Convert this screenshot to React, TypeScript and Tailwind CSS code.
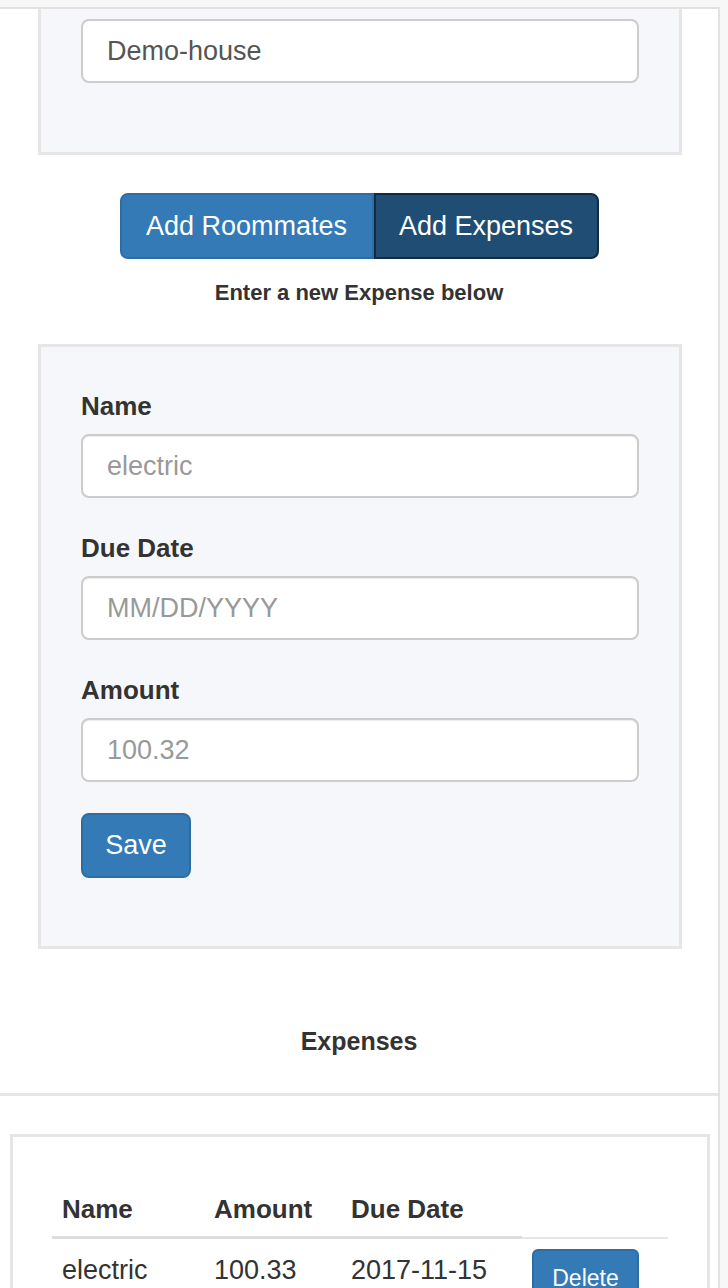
import React from 'react';

const font = { fontFamily: '"Liberation Sans", Arial, Helvetica, sans-serif' };

const Field: React.FC<{ label: string; placeholder: string }> = ({ label, placeholder }) => (
    <div>
        <label className="block text-[26px] font-bold text-[#333] leading-[28px] mb-[14px]">{label}</label>
        <input
            readOnly
            placeholder={placeholder}
            className="block w-full h-[64px] px-[24px] text-[27px] text-[#555] placeholder:text-[#999] bg-white border-2 border-[#ccc] rounded-[8px] shadow-[inset_0_1px_1px_rgba(0,0,0,0.075)] outline-none"
        />
    </div>
);

const App: React.FC = () => {
    return (
        <div className="w-[728px] h-[1288px] overflow-hidden bg-[#f7f7f7] pt-[7px]" style={font}>
            <div className="w-[720px] h-full bg-white border-t-2 border-r-2 border-[#e2e2e2]">
                {/* house panel */}
                <div className="mx-[38px] w-[644px] h-[146px] bg-[#f6f7fb] border-x-[3px] border-b-[3px] border-[#e6e6e6] pt-[10px] px-[40px]">
                    <div className="h-[64px] bg-white border-2 border-[#ccc] rounded-[8px] px-[24px] flex items-center text-[27px] text-[#555]">
                        Demo-house
                    </div>
                </div>

                {/* tabs */}
                <div className="flex justify-center mt-[38px]">
                    <button className="w-[254px] h-[66px] bg-[#337ab7] border-2 border-[#2e6da4] rounded-l-[8px] text-white text-[27px]">
                        Add Roommates
                    </button>
                    <button className="w-[225px] h-[66px] bg-[#204d74] border-2 border-[#122b40] rounded-r-[8px] text-white text-[27px]">
                        Add Expenses
                    </button>
                </div>
                <p className="text-center text-[22px] font-bold text-[#333] mt-[20px] leading-[28px]">Enter a new Expense below</p>

                {/* expense form */}
                <div className="mx-[38px] mt-[37px] w-[644px] h-[605px] bg-[#f6f7fb] border-[3px] border-[#e6e6e6] pt-[45px] px-[40px]">
                    <div className="flex flex-col gap-[36px]">
                        <Field label="Name" placeholder="electric" />
                        <Field label="Due Date" placeholder="MM/DD/YYYY" />
                        <Field label="Amount" placeholder="100.32" />
                    </div>
                    <button className="mt-[31px] w-[110px] h-[65px] bg-[#337ab7] border-2 border-[#2e6da4] rounded-[8px] text-white text-[27px]">
                        Save
                    </button>
                </div>

                <h3 className="text-center text-[25px] font-bold text-[#333] mt-[76px] leading-[32px]">Expenses</h3>
                <div className="mt-[36px] h-[3px] bg-[#e6e6e6]" />

                {/* expense table */}
                <div className="mx-[10px] mt-[38px] w-[700px] h-[200px] border-[3px] border-[#e6e6e6] bg-white pt-[53px] px-[39px]">
                    <table className="w-[616px] border-collapse text-[#333]">
                        <thead>
                            <tr className="text-left text-[26px] font-bold">
                                <th className="w-[152px] px-[10px] pb-[7px] border-b-[3px] border-[#ddd]">Name</th>
                                <th className="w-[137px] px-[10px] pb-[7px] border-b-[3px] border-[#ddd]">Amount</th>
                                <th className="w-[181px] px-[10px] pb-[7px] border-b-[3px] border-[#ddd]">Due Date</th>
                                <th className="border-b-2 border-[#e6e6e6]"></th>
                            </tr>
                        </thead>
                        <tbody>
                            <tr className="text-[27px] align-top">
                                <td className="px-[10px] pt-[11px]">electric</td>
                                <td className="px-[10px] pt-[11px]">100.33</td>
                                <td className="px-[10px] pt-[11px]">2017-11-15</td>
                                <td className="px-[10px] pt-[10px]">
                                    <button className="w-[107px] h-[56px] bg-[#337ab7] border-2 border-[#2e6da4] rounded-[6px] text-white text-[23px] pt-[4px]">
                                        Delete
                                    </button>
                                </td>
                            </tr>
                        </tbody>
                    </table>
                </div>
            </div>
        </div>
    );
};

export default App;
